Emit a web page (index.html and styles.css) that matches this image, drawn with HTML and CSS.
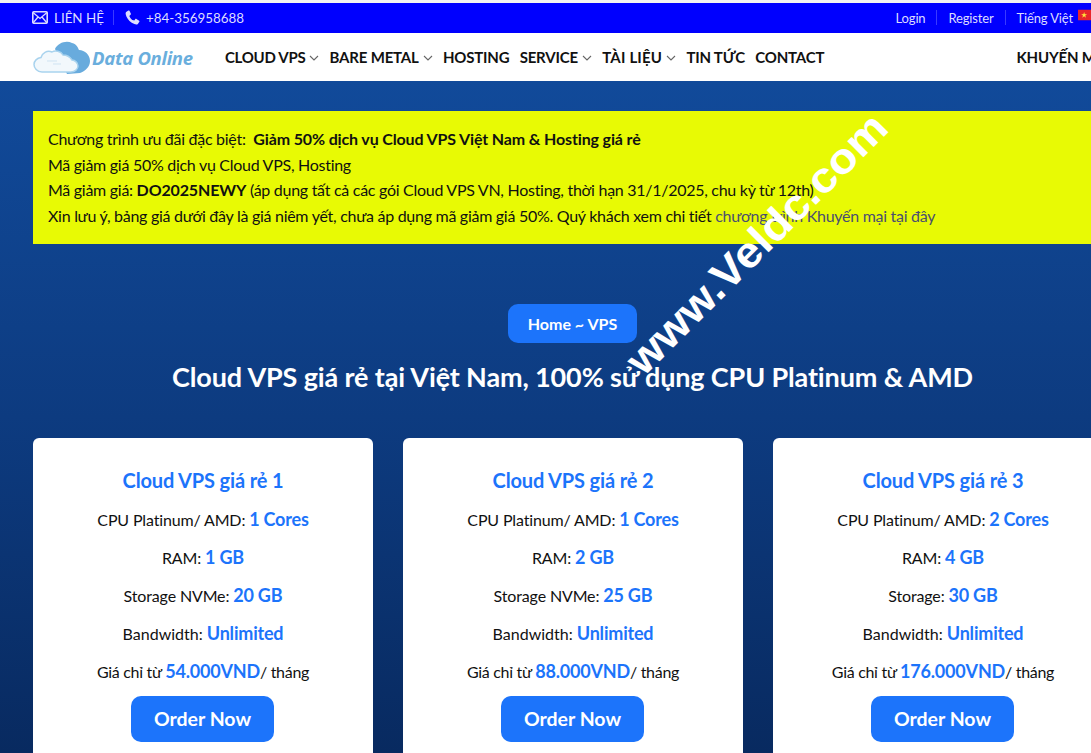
FILE: index.html
```html
<!DOCTYPE html>
<html lang="vi">
<head>
<meta charset="utf-8">
<title>Cloud VPS</title>
<link rel="stylesheet" href="styles.css">
</head>
<body>
<div class="page">
  <div class="topbar">
    <div class="top-left">
      <span class="top-item">
        <svg class="ico-mail" viewBox="0 0 16 13" width="16" height="13"><rect x="0.8" y="0.8" width="14.4" height="11.4" rx="1" fill="none" stroke="#dcdcff" stroke-width="1.6"/><path d="M1 1.5 8 7.5 15 1.5M1 12 6 6M15 12 10 6" fill="none" stroke="#dcdcff" stroke-width="1.3"/></svg>
        LIÊN HỆ
      </span>
      <span class="sep"></span>
      <span class="top-item">
        <svg class="ico-phone" viewBox="0 0 16 16" width="15" height="15"><path d="M3.6.6 1.2 2.2C.4 3 .5 4.600 1.500 6.800 3 10 6 13.500 10 15c1.800.700 3 .500 3.700-.200l1.600-2.200c.300-.400.200-.900-.200-1.200l-2.900-1.900c-.400-.300-.900-.200-1.200.200l-.900 1.200c-.300.300-.600.300-1 .100C7.400 10.800 5.600 8.800 4.800 6.900c-.200-.400-.100-.700.200-1l1-.900c.400-.300.400-.800.200-1.200L4.700.900C4.400.500 4 .400 3.600.600Z" fill="#dcdcff"/></svg>
        +84-356958688
      </span>
    </div>
    <div class="top-right">
      <a class="top-link">Login</a>
      <span class="sep"></span>
      <a class="top-link">Register</a>
      <span class="sep"></span>
      <a class="top-link">Tiếng Việt</a>
      <span class="flag"><svg viewBox="0 0 16 12" width="16" height="12"><rect width="16" height="12" fill="#e8262b"/><path d="M7 2.500 7.800 5 10.400 5 8.300 6.500 9.100 9 7 7.500 4.900 9 5.700 6.500 3.600 5 6.200 5Z" fill="#ffe93b"/></svg></span>
    </div>
  </div>

  <header class="nav">
    <div class="logo">
      <svg viewBox="0 0 60 34" width="60" height="34">
        <path d="M22 9C25 3 33 0 39 3c5 1 6 5 7 7 6 0 11 5 11 11s-5 10-10 12l-13 1Z" fill="#68abdd"/>
        <path d="M9 32C4 32 1 28 1 24.500S4 18 8 17.500C9 13 14 10 19 12c3-2 9-1 11 3 4 0 7 2 9 5 3 0 6 3 6 6s-3 6-7 6Z" fill="#f2f8fc" stroke="#a9d3ee" stroke-width="1.500"/>
        <path d="M14 21h10M20 24h8" stroke="#cfe3f2" stroke-width="1" fill="none"/>
      </svg>
      <span class="logo-text">Data Online</span>
    </div>
    <nav class="menu">
      <a class="menu-item menu-tight">CLOUD VPS<svg class="caret" viewBox="0 0 10 6" width="10" height="6"><path d="M1 1l4 4 4-4" fill="none" stroke="#666" stroke-width="1.100"/></svg></a>
      <a class="menu-item">BARE METAL<svg class="caret" viewBox="0 0 10 6" width="10" height="6"><path d="M1 1l4 4 4-4" fill="none" stroke="#666" stroke-width="1.100"/></svg></a>
      <a class="menu-item">HOSTING</a>
      <a class="menu-item">SERVICE<svg class="caret" viewBox="0 0 10 6" width="10" height="6"><path d="M1 1l4 4 4-4" fill="none" stroke="#666" stroke-width="1.100"/></svg></a>
      <a class="menu-item menu-wide">TÀI LIỆU<svg class="caret" viewBox="0 0 10 6" width="10" height="6"><path d="M1 1l4 4 4-4" fill="none" stroke="#666" stroke-width="1.100"/></svg></a>
      <a class="menu-item">TIN TỨC</a>
      <a class="menu-item">CONTACT</a>
      <a class="menu-item promo">KHUYẾN MẠI</a>
    </nav>
  </header>

  <main class="hero">
    <section class="notice">
      <p>Chương trình ưu đãi đặc biệt:&nbsp; <b>Giảm 50% dịch vụ Cloud VPS Việt Nam &amp; Hosting giá rẻ</b></p>
      <p>Mã giảm giá 50% dịch vụ Cloud VPS, Hosting</p>
      <p>Mã giảm giá: <b>DO2025NEWY</b> (áp dụng tất cả các gói Cloud VPS VN, Hosting, thời hạn 31/1/2025, chu kỳ từ 12th)</p>
      <p>Xin lưu ý, bảng giá dưới đây là giá niêm yết, chưa áp dụng mã giảm giá 50%. Quý khách xem chi tiết <a class="notice-link">chương trình Khuyến mại tại đây</a></p>
    </section>

    <div class="crumb-row"><a class="crumb">Home ~ VPS</a></div>
    <h1 class="title">Cloud VPS giá rẻ tại Việt Nam, 100% sử dụng CPU Platinum &amp; AMD</h1>

    <section class="cards">
      <article class="card">
        <h2 class="card-title">Cloud VPS giá rẻ 1</h2>
        <p>CPU Platinum/ AMD: <b>1 Cores</b></p>
        <p>RAM: <b>1 GB</b></p>
        <p>Storage NVMe: <b>20 GB</b></p>
        <p>Bandwidth: <b>Unlimited</b></p>
        <p>Giá chỉ từ <b>54.000VND</b>/ tháng</p>
        <a class="order">Order Now</a>
      </article>
      <article class="card">
        <h2 class="card-title">Cloud VPS giá rẻ 2</h2>
        <p>CPU Platinum/ AMD: <b>1 Cores</b></p>
        <p>RAM: <b>2 GB</b></p>
        <p>Storage NVMe: <b>25 GB</b></p>
        <p>Bandwidth: <b>Unlimited</b></p>
        <p>Giá chỉ từ <b>88.000VND</b>/ tháng</p>
        <a class="order">Order Now</a>
      </article>
      <article class="card">
        <h2 class="card-title">Cloud VPS giá rẻ 3</h2>
        <p>CPU Platinum/ AMD: <b>2 Cores</b></p>
        <p>RAM: <b>4 GB</b></p>
        <p>Storage: <b>30 GB</b></p>
        <p>Bandwidth: <b>Unlimited</b></p>
        <p>Giá chỉ từ <b>176.000VND</b>/ tháng</p>
        <a class="order">Order Now</a>
      </article>
    </section>
  </main>

  <div class="watermark">www.Veldc.com</div>
</div>
</body>
</html>
```
FILE: styles.css
```css
* { box-sizing: border-box; }
html, body { margin: 0; padding: 0; height: 100%; overflow: hidden; }
body { font-family: Lato, "Noto Sans", sans-serif; background: #f2f2f2; }
.page { position: relative; width: 1091px; height: 753px; padding-top: 3px; overflow: hidden; }
p, h1, h2 { margin: 0; }

.topbar { height: 30px; background: #0000fe; color: #dcdcff; font-size: 13.400px; display: flex; justify-content: space-between; align-items: center; padding-left: 32px; white-space: nowrap; }
.top-left, .top-right { display: flex; align-items: center; margin-top: -1px; }
.top-item { display: flex; align-items: center; gap: 6px; }
.top-item + .sep { margin: 0 12px 0 9px; }
.sep { width: 1px; height: 15px; background: #3a3aff; }
.top-left .top-item:last-child { margin-left: -1px; }
.top-right { margin-right: -1px; font-size: 13px; }
.top-link { color: #dcdcff; letter-spacing: -0.15px; }
.top-right .sep { margin: 0 11px 0 11px; }
.flag { margin-left: 5px; width: 14px; overflow: hidden; display: flex; margin-top: -5px; }

.nav { height: 48px; background: #fff; display: flex; align-items: center; padding-left: 33px; white-space: nowrap; }
.logo { display: flex; align-items: center; width: 192px; flex: none; }
.logo-text { font-family: "Open Sans", sans-serif; font-style: italic; font-weight: 700; font-size: 18.500px; letter-spacing: -0.3px; color: #6aaedd; margin-left: -1px; }
.menu { display: flex; align-items: center; gap: 10.200px; font-size: 15px; font-weight: 700; color: #111; letter-spacing: -0.18px; }
.menu-item { display: flex; align-items: center; }
.menu-tight { letter-spacing: -0.3px; }
.menu-wide { letter-spacing: 0.2px; }
.caret { margin-left: 4px; margin-top: 1px; }
.promo { margin-left: 182px; }

.hero { height: 672px; background: linear-gradient(180deg, #114a9a 0%, #0d3b80 50%, #082a60 100%); padding: 30px 0 0 33px; }
.notice { width: 1058px; height: 133px; background: #e8fa04; color: #111; padding: 15px 15px 0; font-size: 16px; line-height: 25.600px; white-space: nowrap; letter-spacing: -0.28px; }
.notice b { letter-spacing: -0.14px; }
.notice-link { color: #4a4f70; }
.crumb-row { display: flex; justify-content: center; width: 1079px; margin-top: 60px; }
.crumb { height: 39px; line-height: 39px; padding: 0 20px; background: #1c74fb; color: #fff; border-radius: 10px; font-size: 16px; font-weight: 700; }
.title { width: 1079px; margin-top: 14px; text-align: center; color: #fff; font-size: 27px; font-weight: 700; line-height: 40px; white-space: nowrap; letter-spacing: -0.14px; }

.cards { display: flex; gap: 30px; margin-top: 41px; }
.card { flex: none; width: 340px; height: 400px; background: #fff; border-radius: 6px; text-align: center; padding-top: 27px; font-size: 16px; color: #111; }
.card p { height: 38px; line-height: 38px; white-space: nowrap; letter-spacing: -0.15px; }
.card p:nth-of-type(4) { letter-spacing: 0; }
.card p:nth-of-type(5) { letter-spacing: -0.3px; }
.card p b { color: #1c74fb; font-weight: 700; font-size: 18px; letter-spacing: -0.2px; }
.card-title { color: #1c74fb; font-size: 20px; font-weight: 700; line-height: 30px; margin-bottom: 5px; letter-spacing: -0.15px; }
.order { display: inline-block; margin: 6px 1px 0 0; width: 143px; height: 46px; line-height: 46px; border-radius: 10px; background: #1c74fb; color: #fff; font-weight: 700; font-size: 19.500px; }

.watermark { position: absolute; left: 583px; top: 222px; width: 340px; text-align: center; font-family: "Liberation Sans", sans-serif; font-weight: 700; font-size: 46.500px; color: #fff; line-height: 50px; transform: rotate(-45deg) scaleY(0.92); white-space: nowrap; pointer-events: none; }
```
